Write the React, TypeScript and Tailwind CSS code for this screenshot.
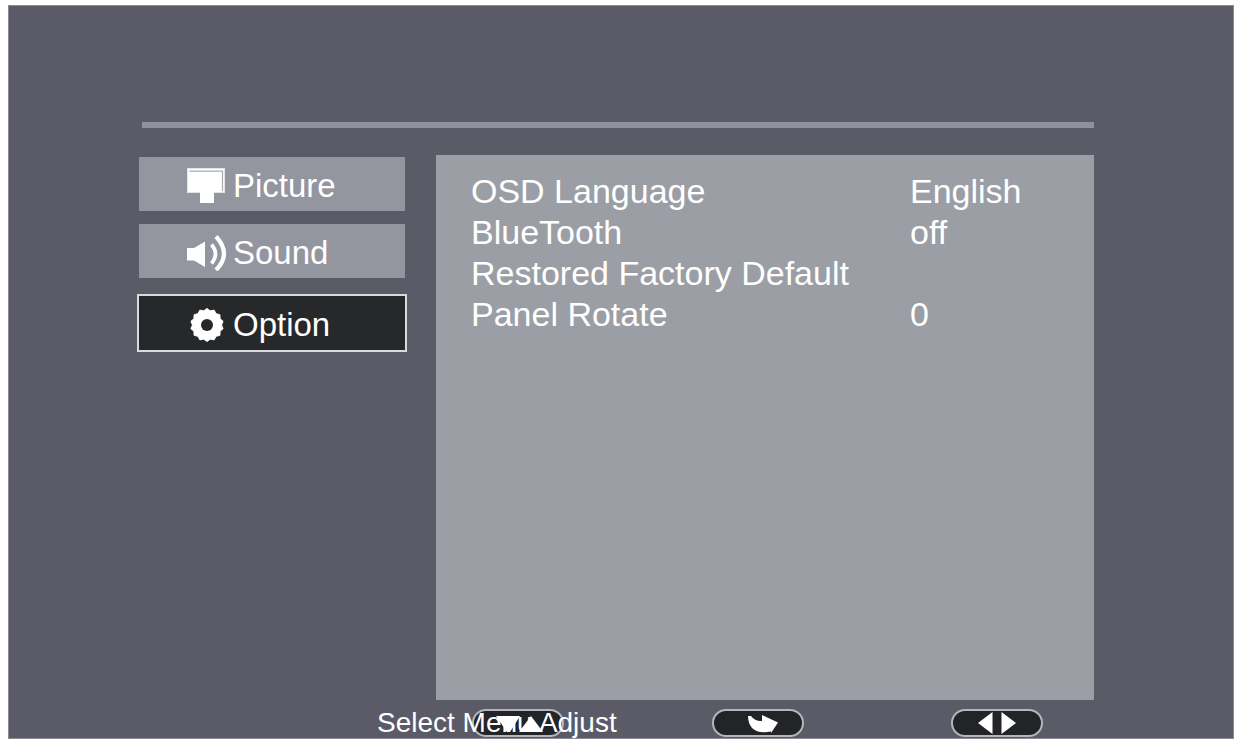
import type { ReactNode } from "react";

function MonitorIcon() {
  return (
    <svg width="40" height="36" viewBox="0 0 40 36" aria-hidden="true">
      <rect x="0.500" y="0.500" width="37" height="24" fill="#fff" stroke="#e3e4e8" />
      <path d="M2.5 3.2H35.5V23" fill="none" stroke="#a9abb3" strokeWidth="1.2" />
      <rect x="13" y="24" width="14" height="11" fill="#fff" />
    </svg>
  );
}

function SpeakerIcon() {
  return (
    <svg width="40" height="36" viewBox="0 0 40 36" aria-hidden="true">
      <path d="M0 13H7L18 6.500V32L7 25.500H0Z" fill="#fff" />
      <path d="M24.500 9.500Q32.500 19 24.500 28.500" fill="none" stroke="#fff" strokeWidth="3.6" />
      <path d="M29 1.500Q45 19 29 35" fill="none" stroke="#fff" strokeWidth="4.2" />
    </svg>
  );
}

const teeth = Array.from({ length: 28 }, (_, i) => {
  const angle = (i * Math.PI) / 14 - Math.PI / 2;
  const radius = i % 2 === 0 ? 16.5 : 14.5;
  return `${20 + radius * Math.cos(angle)},${18 + radius * Math.sin(angle)}`;
}).join(" ");

function GearIcon() {
  return (
    <svg width="40" height="36" viewBox="0 0 40 36" aria-hidden="true">
      <polygon points={teeth} fill="#fff" stroke="#fff" strokeLinejoin="round" />
      <circle cx="20" cy="18" r="6" fill="#272829" />
    </svg>
  );
}

const menu = [
  { label: "Picture", icon: <MonitorIcon />, active: false },
  { label: "Sound", icon: <SpeakerIcon />, active: false },
  { label: "Option", icon: <GearIcon />, active: true },
];

const settings = [
  ["OSD Language", "English"],
  ["BlueTooth", "off"],
  ["Restored Factory Default", ""],
  ["Panel Rotate", "0"],
];

function Key({ label, children }: { label: string; children: ReactNode }) {
  return (
    <button
      type="button"
      aria-label={label}
      className="flex h-7 w-[92px] items-center justify-center rounded-full border-2 border-[#b4b6ba] bg-[#222427]"
    >
      {children}
    </button>
  );
}

export default function App() {
  return (
    <div className="flex min-h-screen bg-white pt-[5px] pr-[3px] pb-px pl-2 font-['Liberation_Sans',Arial,sans-serif] text-white">
      <div className="flex flex-1 flex-col border border-[#8b8c93] bg-[#5a5b67] pr-[139px] pl-32">
        <header className="ml-[5px] h-[122px] border-b-[6px] border-[#8f919d]" />
        <main className="mt-[27px] flex flex-1 gap-[29px]">
          <nav className="flex w-[270px] shrink-0 flex-col gap-[13px] pt-[2px]">
            {menu.map((item) => (
              <button
                key={item.label}
                type="button"
                aria-current={item.active ? "page" : undefined}
                className={
                  item.active
                    ? "mt-[3px] flex h-[58px] items-center gap-[6px] border-2 border-[#d8dade] bg-[#272829] pt-1 pl-12 text-[33px] leading-10"
                    : "mx-[2px] flex h-[54px] items-center gap-[6px] bg-[#93959f] pt-1 pl-12 text-[33px] leading-10"
                }
              >
                {item.icon}
                <span>{item.label}</span>
              </button>
            ))}
          </nav>
          <section className="flex-1 bg-[#9b9ea4] pt-4 pl-[35px]">
            <table className="w-full text-left text-[34px] leading-[41px]">
              <tbody>
                {settings.map(([name, value]) => (
                  <tr key={name}>
                    <th scope="row" className="p-0 font-normal">{name}</th>
                    <td className="w-[184px] p-0">{value}</td>
                  </tr>
                ))}
              </tbody>
            </table>
          </section>
        </main>
        <footer className="ml-[299px] flex h-[38px] items-center justify-between pt-2 pr-[51px] pl-9">
          <div className="relative">
            <Key label="Up and down">
              <svg width="60" height="20" viewBox="0 0 60 20" aria-hidden="true">
                <path d="M8 3H32L22 19H19ZM31 19L43 3L55 19Z" fill="#fff" />
              </svg>
            </Key>
            <span className="pointer-events-none absolute top-0 -left-[95px] text-[28px] leading-7 whitespace-nowrap">
              Select Menu Adjust
            </span>
          </div>
          <Key label="Enter">
            <svg width="30" height="20" viewBox="0 0 30 20" className="ml-[10px]" aria-hidden="true">
              <path d="M0 3L3 3Q7 8.500 14 8V2L30 9.500L23 20V18.500Q10 21 4 15Q0 10 0 3Z" fill="#fff" />
            </svg>
          </Key>
          <Key label="Left and right">
            <svg width="40" height="24" viewBox="0 0 40 24" aria-hidden="true">
              <path d="M15.500 1V23L1 12ZM24.500 1V23L39 12Z" fill="#fff" />
            </svg>
          </Key>
        </footer>
      </div>
    </div>
  );
}
